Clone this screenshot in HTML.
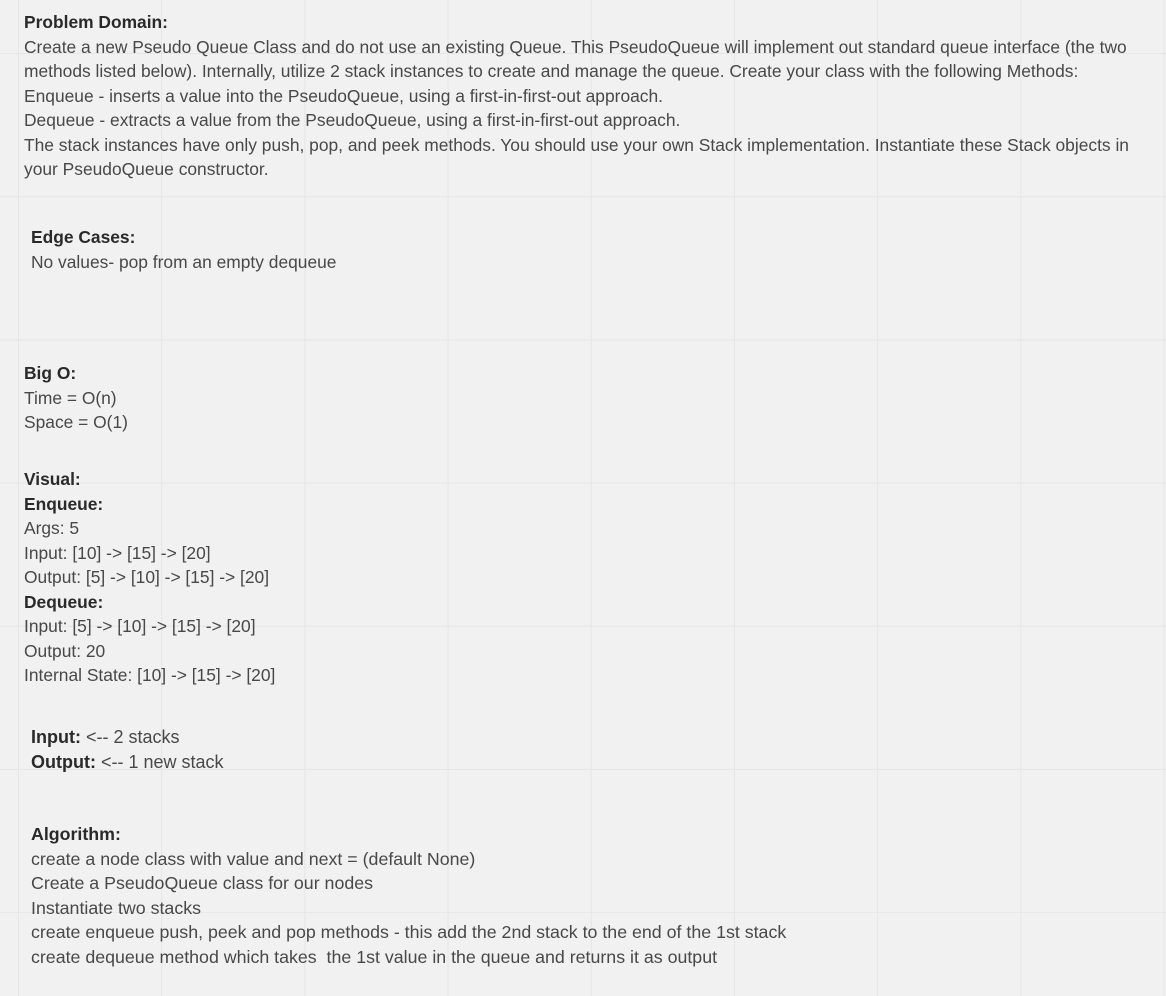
<!DOCTYPE html>
<html><head><meta charset="utf-8"><style>
html,body{margin:0;padding:0}
body{width:1166px;height:996px;position:relative;overflow:hidden;background-color:#f1f1f1;
background-image:linear-gradient(to right,#e6e6e6 1px,transparent 1px),linear-gradient(to bottom,#e6e6e6 1px,transparent 1px);
background-size:143.2px 143.2px;background-position:18px 53px;
font-family:"Liberation Sans",sans-serif;font-size:17.4px;color:#484848}
.b{position:absolute;white-space:nowrap;line-height:24.5px}
b{color:#2a2a2a}
</style></head><body>
<div class="b" style="left:24px;top:10px"><b>Problem Domain:</b><br>
Create a new Pseudo Queue Class and do not use an existing Queue. This PseudoQueue will implement out standard queue interface (the two<br>
methods listed below). Internally, utilize 2 stack instances to create and manage the queue. Create your class with the following Methods:<br>
Enqueue - inserts a value into the PseudoQueue, using a first-in-first-out approach.<br>
Dequeue - extracts a value from the PseudoQueue, using a first-in-first-out approach.<br>
The stack instances have only push, pop, and peek methods. You should use your own Stack implementation. Instantiate these Stack objects in<br>
your PseudoQueue constructor.</div>
<div class="b" style="left:31px;top:225px"><b>Edge Cases:</b><br>No values- pop from an empty dequeue</div>
<div class="b" style="left:24px;top:361px"><b>Big O:</b><br>Time = O(n)<br>Space = O(1)</div>
<div class="b" style="left:24px;top:467px"><b>Visual:</b><br><b>Enqueue:</b><br>Args: 5<br>Input: [10] -&gt; [15] -&gt; [20]<br>Output: [5] -&gt; [10] -&gt; [15] -&gt; [20]<br><b>Dequeue:</b><br>Input: [5] -&gt; [10] -&gt; [15] -&gt; [20]<br>Output: 20<br>Internal State: [10] -&gt; [15] -&gt; [20]</div>
<div class="b" style="left:31px;top:725px;font-size:18px"><b>Input:</b> &lt;-- 2 stacks<br><b>Output:</b> &lt;-- 1 new stack</div>
<div class="b" style="left:31px;top:822px;font-size:17.8px"><b>Algorithm:</b><br>create a node class with value and next = (default None)<br>Create a PseudoQueue class for our nodes<br>Instantiate two stacks<br>create enqueue push, peek and pop methods - this add the 2nd stack to the end of the 1st stack<br>create dequeue method which takes&nbsp; the 1st value in the queue and returns it as output</div>
</body></html>
